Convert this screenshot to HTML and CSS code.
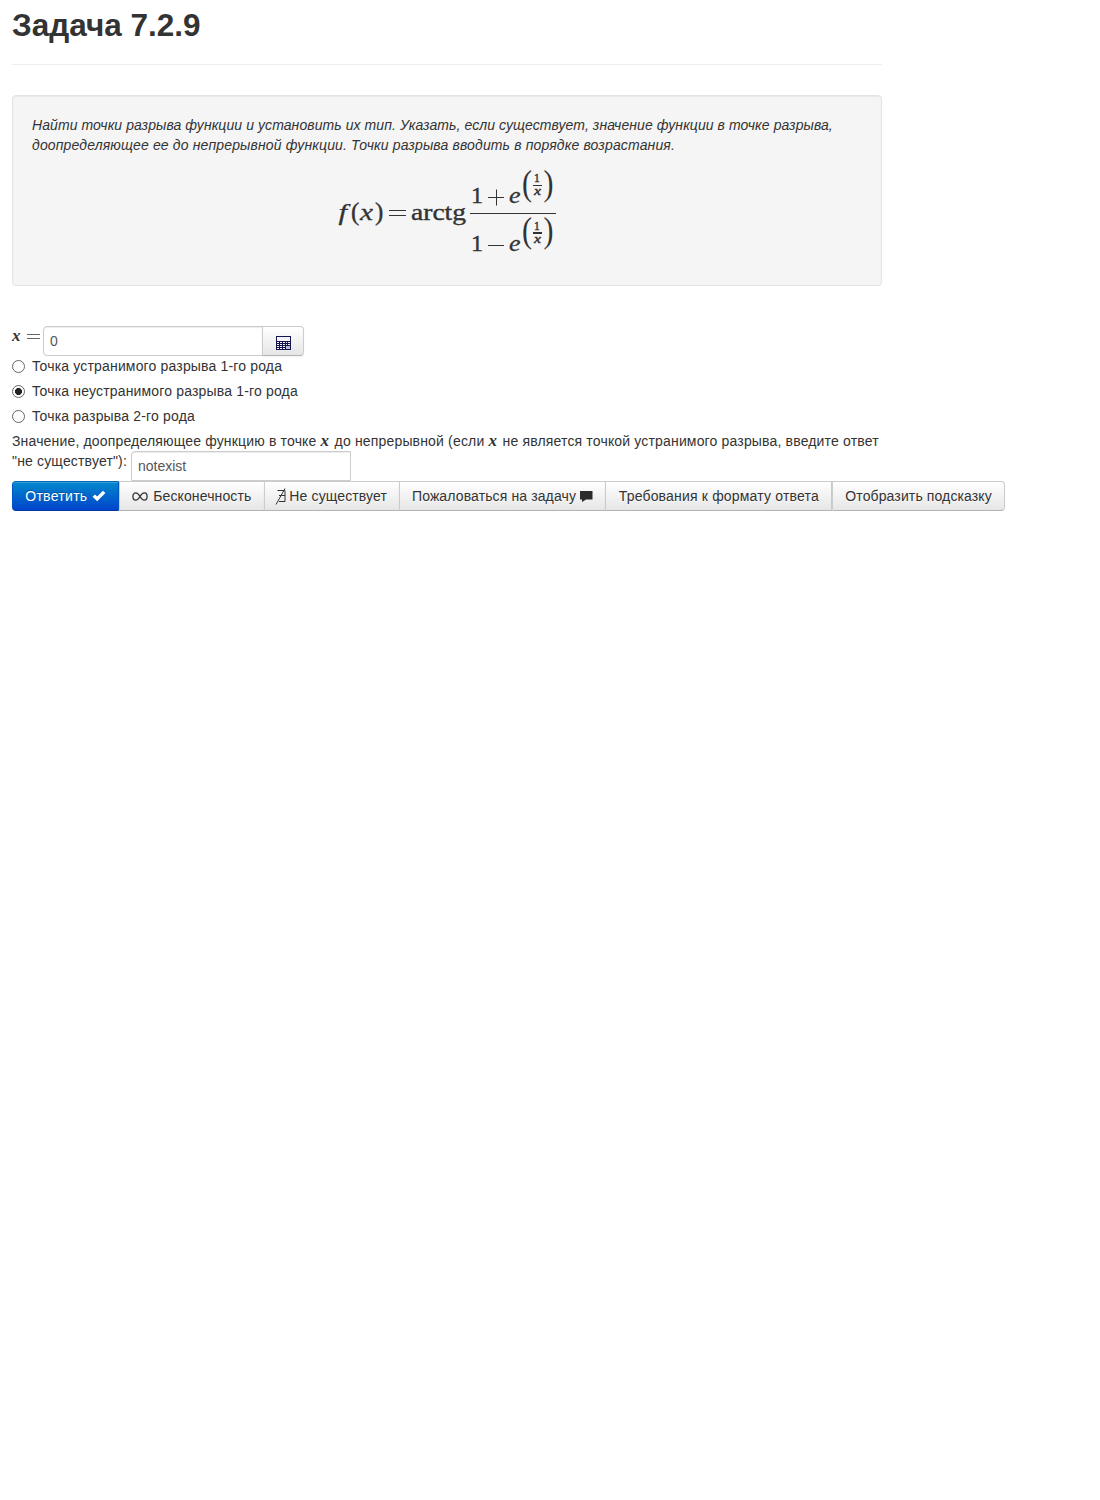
FILE: index.html
```html
<!DOCTYPE html>
<html lang="ru">
<head>
<meta charset="utf-8">
<title>Задача 7.2.9</title>
<link rel="stylesheet" href="styles.css">
</head>
<body>
<main class="page">
  <header class="page-header"><h2>Задача 7.2.9</h2></header>
  <section class="well">
    <p class="statement">Найти точки разрыва функции и установить их тип. Указать, если существует, значение функции в точке разрыва,<br><span class="wide">доопределяющее ее до непрерывной функции. Точки разрыва вводить в порядке возрастания.</span></p>
    <svg class="formula" width="224" height="92" viewBox="0 0 224 92">
      <text class="it" x="4.500" y="53" font-size="24" textLength="8.500" lengthAdjust="spacingAndGlyphs">f</text>
      <text x="17" y="53" font-size="25">(</text>
      <text class="it" x="26" y="53" font-size="24" textLength="13" lengthAdjust="spacingAndGlyphs">x</text>
      <text x="41" y="53" font-size="25">)</text>
      <path class="rule" d="M55 43.500h17M55 48.500h17"/>
      <text x="77" y="53" font-size="24" textLength="55" lengthAdjust="spacingAndGlyphs">arctg</text>
      <path class="rule" d="M136 46.500h86"/>
      <text x="137" y="36" font-size="24">1</text>
      <path class="rule" d="M154 30.500h16M162.500 22.500v16"/>
      <text class="it" x="175" y="36" font-size="24" textLength="11.500" lengthAdjust="spacingAndGlyphs">e</text>
      <text x="188" y="27.500" font-size="35" class="thin" textLength="10" lengthAdjust="spacingAndGlyphs">(</text>
      <text x="200" y="15" font-size="11.500" class="small">1</text>
      <path class="rule" d="M199 18.500h9"/>
      <text class="it small" x="200" y="28" font-size="12" textLength="7" lengthAdjust="spacingAndGlyphs">x</text>
      <text x="209.500" y="27.500" font-size="35" class="thin" textLength="10" lengthAdjust="spacingAndGlyphs">)</text>
      <text x="137" y="84" font-size="24">1</text>
      <path class="rule" d="M154 78.500h16"/>
      <text class="it" x="175" y="84" font-size="24" textLength="11.500" lengthAdjust="spacingAndGlyphs">e</text>
      <text x="188" y="74.500" font-size="35" class="thin" textLength="10" lengthAdjust="spacingAndGlyphs">(</text>
      <text x="200" y="63" font-size="11.500" class="small">1</text>
      <path class="rule thick" d="M199 66h9"/>
      <text class="it small" x="200" y="76" font-size="12" textLength="7" lengthAdjust="spacingAndGlyphs">x</text>
      <text x="209.500" y="74.500" font-size="35" class="thin" textLength="10" lengthAdjust="spacingAndGlyphs">)</text>
    </svg>
  </section>
  <form class="answer">
    <div class="point">
      <span class="lead"><i class="var">x</i><svg width="13" height="7" viewBox="0 0 13 7"><path d="M0 1.500h13M0 5.500h13" stroke="#555" stroke-width=".9"/></svg></span>
      <input class="field" type="text" value="0">
      <button class="btn calc" type="button" aria-label="Калькулятор"><svg width="15" height="14" viewBox="0 0 15 14"><path fill="#15154f" d="M0 0h15v14H0z"/><path fill="#f4f4fa" d="M1 1h13v4H1zM1 6h2v1H1zM4 6h2v1H4zM7 6h2v1H7zM10 6h1v1h-1zM12 6h2v1h-2zM1 8h2v1H1zM4 8h2v1H4zM7 8h2v1H7zM10 8h1v1h-1zM12 8h2v1h-2zM1 10h2v1H1zM4 10h2v1H4zM7 10h2v1H7zM1 12h2v1H1zM4 12h2v1H4zM7 12h2v1H7z"/><path fill="#b9b9d4" d="M10 10h4v3h-4z"/></svg></button>
    </div>
    <label class="radio"><span class="dot"></span>Точка устранимого разрыва 1-го рода</label>
    <label class="radio"><span class="dot on"></span>Точка неустранимого разрыва 1-го рода</label>
    <label class="radio"><span class="dot"></span>Точка разрыва 2-го рода</label>
    <div class="line">Значение, доопределяющее функцию в точке <i class="var">x</i> до непрерывной (если <i class="var">x</i> не является точкой устранимого разрыва, введите ответ</div>
    <div class="value"><span>"не существует"):</span><input class="field" type="text" value="notexist"></div>
    <div class="buttons">
      <button class="btn primary" type="button">Ответить <svg width="14" height="12" viewBox="0 0 14 12"><path d="M.6 6.700 3 4.400l2.200 2.200L11 .8l2.400 2.200-8.200 8.200z" fill="#fff"/></svg></button>
      <button class="btn inf" type="button"><svg width="16" height="9" viewBox="0 0 16 9"><path d="M8 4.500C6.500 2 5.300.9 3.800.9 2.100.9.900 2.400.900 4.500s1.200 3.600 2.900 3.600C5.300 8.100 6.500 7 8 4.500S10.900.9 12.400.9c1.600 0 2.700 1.500 2.700 3.600s-1.100 3.600-2.700 3.600C10.700 8.100 9.500 7 8 4.500z" fill="none" stroke="#333" stroke-width="1.300"/></svg>Бесконечность</button>
      <button class="btn none" type="button"><svg width="12" height="17" viewBox="0 0 12 17"><path d="M2.500 2.500h7.500v11H4M4 7.500h6M10 .5 1 16.500" fill="none" stroke="#333"/></svg>Не существует</button>
      <button class="btn report" type="button">Пожаловаться на задачу <svg width="13" height="12" viewBox="0 0 13 12"><path d="M0 1h12.500v8.500H6l-4 2.500V9.500H0z" fill="#2b2b2b"/></svg></button>
      <button class="btn format" type="button">Требования к формату ответа</button>
      <button class="btn hint" type="button">Отобразить подсказку</button>
    </div>
  </form>
</main>
</body>
</html>
```
FILE: styles.css
```css
* { box-sizing: border-box; }
body { margin: 0; background: #fff; color: #333; font: 14px/20px "Liberation Sans", Arial, sans-serif; }
.page { width: 870px; margin-left: 12px; padding-top: 5px; }
.page-header { height: 60px; border-bottom: 1px solid #eee; margin-bottom: 30px; }
h2 { margin: 0; font-size: 31.5px; line-height: 40px; }
.well { height: 191px; padding: 19px; background: #f5f5f5; border: 1px solid #e3e3e3; border-radius: 4px; box-shadow: inset 0 1px 1px rgba(0,0,0,.05); }
.statement { margin: 0; font-style: italic; white-space: nowrap; letter-spacing: .08px; }
.wide { letter-spacing: .145px; }
.formula { display: block; margin: 12px 0 0 302px; font-family: "Liberation Serif", serif; fill: #333; overflow: visible; }
.formula text { stroke: #333; stroke-width: .4px; }
.formula .it { font-style: italic; stroke-width: .3px; }
.formula .thin { stroke: none; }
.formula .small { stroke-width: .4px; }
.rule { stroke: #333; stroke-width: 1; fill: none; }
.rule.thick { stroke-width: 2; }
.answer { margin: 40px 0 0; letter-spacing: .165px; }
.point { display: flex; height: 30px; }
.lead { display: flex; align-items: center; gap: 5px; width: 31px; height: 20px; }
.var { display: inline-block; width: 10px; font: italic bold 17px/18px "Liberation Serif", serif; }
.field { width: 220px; height: 30px; padding: 4px 6px; border: 1px solid #ccc; border-radius: 4px 0 0 4px; background: #fff; color: #555; font: inherit; box-shadow: inset 0 1px 1px rgba(0,0,0,.075); }
.btn { display: flex; align-items: center; justify-content: center; height: 30px; padding: 0; margin: 0 0 0 -1px; border: 1px solid #ccc; border-bottom-color: #b3b3b3; background: linear-gradient(#fff, #e6e6e6); color: #333; font: inherit; letter-spacing: .12px; white-space: pre; box-shadow: inset 0 1px 0 rgba(255,255,255,.2), 0 1px 2px rgba(0,0,0,.05); text-shadow: 0 1px 1px rgba(255,255,255,.75); }
.calc { width: 42px; border-radius: 0 4px 4px 0; padding-top: 3px; }
.radio { display: flex; height: 20px; margin-bottom: 5px; }
.dot { width: 13px; height: 13px; margin: 4px 7px 0 0; border: 1px solid #666; border-radius: 50%; background: #fff; }
.dot.on { background: radial-gradient(circle, #222 0 3.2px, #fff 3.8px); }
.line { height: 20px; white-space: nowrap; }
.line .var { line-height: 16px; }
.value { display: flex; height: 30px; }
.value span { width: 119px; white-space: nowrap; }
.value .field { border-radius: 4px 0 0 0; }
.buttons { display: flex; width: 993px; }
.primary { width: 107px; margin: 0; border-color: #0067b8 #0055c4 #003ba0; border-radius: 4px 0 0 4px; background: linear-gradient(#08c, #04c); color: #fff; letter-spacing: .3px; text-shadow: 0 -1px 0 rgba(0,0,0,.25); }
.inf { width: 146px; margin: 0; gap: 5px; }
.none { width: 136px; gap: 2px; padding-right: 1px; }
.report { width: 208px; }
.format { width: 227px; letter-spacing: .18px; }
.hint { width: 173px; margin: 0; border-radius: 0 4px 4px 0; }
```
